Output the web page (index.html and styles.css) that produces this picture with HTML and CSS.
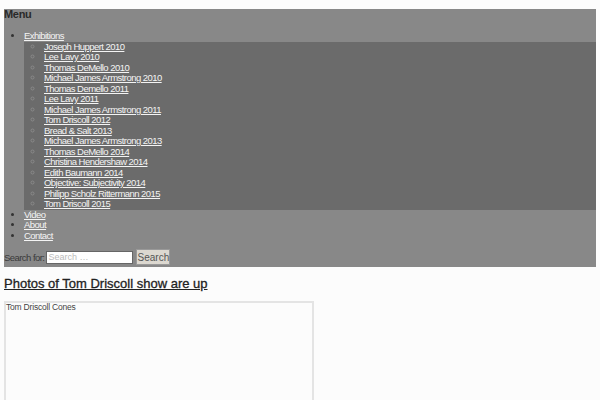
FILE: index.html
```html
<!DOCTYPE html>
<html lang="en">
<head>
    <meta charset="UTF-8">
    <title>Tom Driscoll</title>
    <link rel="stylesheet" href="styles.css">
</head>
<body>
    <nav class="site-nav">
        <h3 class="menu-title">Menu</h3>
        <ul class="menu">
            <li><a href="#">Exhibitions</a>
                <ul class="sub-menu">
                    <li><a href="#">Joseph Huppert 2010</a></li>
                    <li><a href="#">Lee Lavy 2010</a></li>
                    <li><a href="#">Thomas DeMello 2010</a></li>
                    <li><a href="#">Michael James Armstrong 2010</a></li>
                    <li><a href="#">Thomas Demello 2011</a></li>
                    <li><a href="#">Lee Lavy 2011</a></li>
                    <li><a href="#">Michael James Armstrong 2011</a></li>
                    <li><a href="#">Tom Driscoll 2012</a></li>
                    <li><a href="#">Bread &amp; Salt 2013</a></li>
                    <li><a href="#">Michael James Armstrong 2013</a></li>
                    <li><a href="#">Thomas DeMello 2014</a></li>
                    <li><a href="#">Christina Hendershaw 2014</a></li>
                    <li><a href="#">Edith Baumann 2014</a></li>
                    <li><a href="#">Objective: Subjectivity 2014</a></li>
                    <li><a href="#">Philipp Scholz Rittermann 2015</a></li>
                    <li><a href="#">Tom Driscoll 2015</a></li>
                </ul>
            </li>
            <li><a href="#">Video</a></li>
            <li><a href="#">About</a></li>
            <li><a href="#">Contact</a></li>
        </ul>
        <form class="search-form">
            <label for="s">Search for:</label>
            <input type="search" id="s" placeholder="Search …">
            <button type="submit">Search</button>
        </form>
    </nav>
    <h2 class="entry-title"><a href="#">Photos of Tom Driscoll show are up</a></h2>
    <div class="embed">
        <span>Tom Driscoll Cones</span>
    </div>
</body>
</html>
```

FILE: styles.css
```css
body {
    margin: 9px 4px 0;
    background: #fcfcfc;
    font-family: 'Liberation Sans', Arial, sans-serif;
    color: #333;
}
.site-nav {
    background: #888;
    padding: 0 0 1px;
}
.menu-title {
    margin: 0;
    padding: 0;
    font-size: 11px;
    line-height: 11px;
    font-weight: bold;
    letter-spacing: -0.3px;
    color: #2a2a2a;
}
.menu {
    margin: 11px 0 0;
    padding: 0 0 0 20px;
    font-size: 9.5px;
    line-height: 10.5px;
    letter-spacing: -0.55px;
    color: #333;
}
.menu a {
    color: #f4f4f4;
}
.sub-menu {
    background: #6b6b6b;
    margin: 0;
    padding: 0 0 0 20px;
    list-style: circle;
    color: #8a8a8a;
}
.search-form {
    display: flex;
    align-items: center;
    margin-top: 7px;
    font-size: 9.5px;
    letter-spacing: -0.55px;
    height: 18px;
    color: #3a3a3a;
}
.search-form label {
    margin-right: 2px;
}
.search-form input {
    width: 87px;
    height: 13px;
    box-sizing: border-box;
    padding: 0 1px;
    border: 1px solid #666;
    background: #fff;
    font: 9px 'Liberation Sans', Arial, sans-serif;
}
.search-form input::placeholder {
    color: #bbb;
}
.search-form button {
    margin-left: 3px;
    width: 34px;
    height: 16px;
    padding: 0;
    border: 1px solid #999;
    background: #dcd8d0;
    color: #555;
    font: 10px 'Liberation Sans', Arial, sans-serif;
}
.entry-title {
    margin: 10px 0 10px;
    font-size: 13px;
    line-height: 14px;
    font-weight: normal;
    font-family: 'Liberation Sans', Arial, sans-serif;
    -webkit-text-stroke: 0.3px #222;
}
.entry-title a {
    color: #222;
}
.embed {
    box-sizing: border-box;
    width: 310px;
    height: 120px;
    border: 2px solid #e4e4e4;
    font-size: 8.5px;
    line-height: 9px;
    letter-spacing: -0.2px;
    color: #444;
    padding: 0;
}
```
